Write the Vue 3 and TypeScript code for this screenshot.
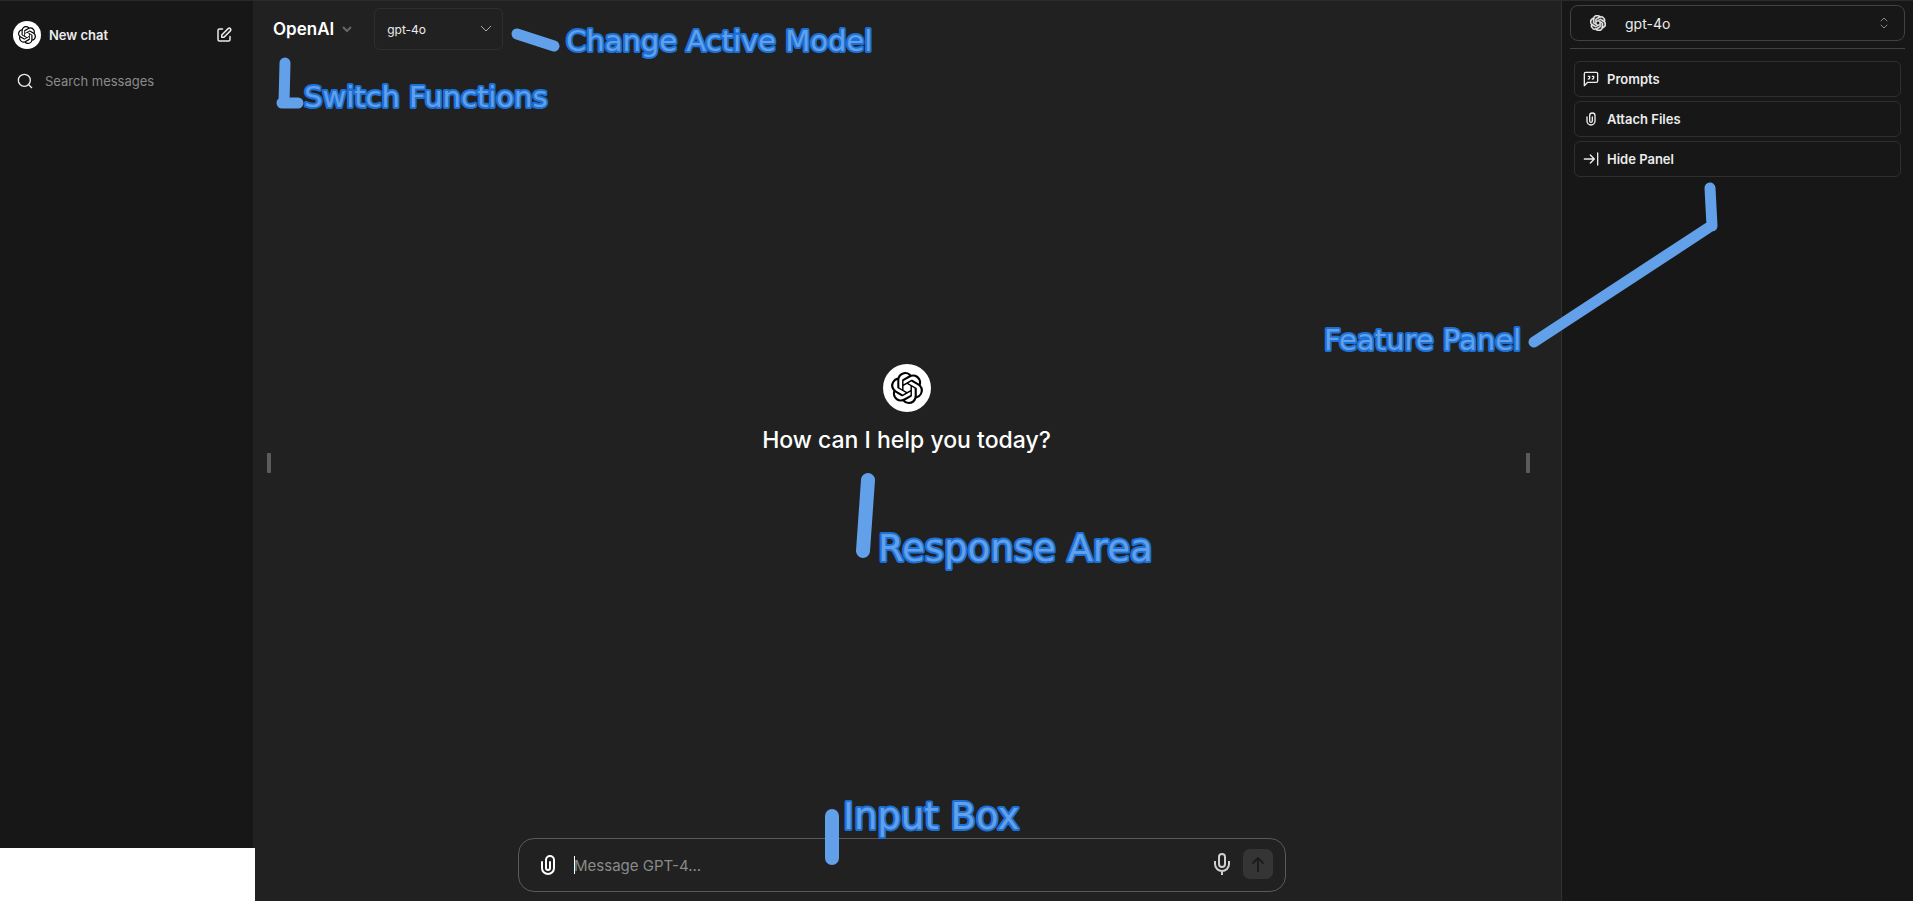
<script setup lang="ts">
import { ref } from 'vue'

const activeModel = ref('gpt-4o')
const panelModel = ref('gpt-4o')
const search = ref('')
const message = ref('')

const logoPath =
  'M22.2819 9.8211a5.9847 5.9847 0 0 0-.5157-4.9108 6.0462 6.0462 0 0 0-6.5098-2.9A6.0651 6.0651 0 0 0 4.9807 4.1818a5.9847 5.9847 0 0 0-3.9977 2.9 6.0462 6.0462 0 0 0 .7427 7.0966 5.98 5.98 0 0 0 .511 4.9107 6.051 6.051 0 0 0 6.5146 2.9001A5.9847 5.9847 0 0 0 13.2599 24a6.0557 6.0557 0 0 0 5.7718-4.2058 5.9894 5.9894 0 0 0 3.9977-2.9001 6.0557 6.0557 0 0 0-.7475-7.0729zm-9.022 12.6081a4.4755 4.4755 0 0 1-2.8764-1.0408l.1419-.0804 4.7783-2.7582a.7948.7948 0 0 0 .3927-.6813v-6.7369l2.02 1.1686a.071.071 0 0 1 .038.052v5.5826a4.504 4.504 0 0 1-4.4945 4.4944zm-9.6607-4.1254a4.4708 4.4708 0 0 1-.5346-3.0137l.142.0852 4.783 2.7582a.7712.7712 0 0 0 .7806 0l5.8428-3.3685v2.3324a.0804.0804 0 0 1-.0332.0615L9.74 19.9502a4.4992 4.4992 0 0 1-6.1408-1.6464zM2.3408 7.8956a4.485 4.485 0 0 1 2.3655-1.9728V11.6a.7664.7664 0 0 0 .3879.6765l5.8144 3.3543-2.0201 1.1685a.0757.0757 0 0 1-.071 0l-4.8303-2.7865A4.504 4.504 0 0 1 2.3408 7.872zm16.5963 3.8558L13.1038 8.364 15.1192 7.2a.0757.0757 0 0 1 .071 0l4.8303 2.7913a4.4944 4.4944 0 0 1-.6765 8.1042v-5.6772a.79.79 0 0 0-.407-.667zm2.0107-3.0231l-.142-.0852-4.7735-2.7818a.7759.7759 0 0 0-.7854 0L9.409 9.2297V6.8974a.0662.0662 0 0 1 .0284-.0615l4.8303-2.7866a4.4992 4.4992 0 0 1 6.6802 4.66zM8.3065 12.863l-2.02-1.1638a.0804.0804 0 0 1-.038-.0567V6.0742a4.4992 4.4992 0 0 1 7.3757-3.4537l-.142.0805L8.704 5.459a.7948.7948 0 0 0-.3927.6813zm1.0976-2.3654l2.602-1.4998 2.6069 1.4998v2.9994l-2.5974 1.4997-2.6067-1.4997Z'

interface Note {
  text: string
  x: number
  y: number
  large: boolean
}

const notes: Note[] = [
  { text: 'Change Active Model', x: 566, y: 51, large: false },
  { text: 'Switch Functions', x: 304, y: 107, large: false },
  { text: 'Feature Panel', x: 1324, y: 350, large: false },
  { text: 'Response Area', x: 878, y: 561, large: true },
  { text: 'Input Box', x: 843, y: 829, large: true },
]
</script>

<template>
  <div class="app">
    <aside class="sidebar">
      <button type="button" class="new-chat">
        <span class="avatar small">
          <svg viewBox="0 0 24 24" width="18" height="18" fill="currentColor"><path :d="logoPath" /></svg>
        </span>
        <span class="new-label">New chat</span>
        <svg class="compose" viewBox="0 0 24 24" width="18" height="18" fill="currentColor">
          <path fill-rule="evenodd" d="M16.793 2.793a3.121 3.121 0 1 1 4.414 4.414l-8.5 8.5A1 1 0 0 1 12 16H9a1 1 0 0 1-1-1v-3a1 1 0 0 1 .293-.707l8.5-8.5Zm3 1.414a1.121 1.121 0 0 0-1.586 0L10 12.414V14h1.586l8.207-8.207a1.121 1.121 0 0 0 0-1.586ZM6 5a1 1 0 0 0-1 1v12a1 1 0 0 0 1 1h12a1 1 0 0 0 1-1v-4a1 1 0 1 1 2 0v4a3 3 0 0 1-3 3H6a3 3 0 0 1-3-3V6a3 3 0 0 1 3-3h4a1 1 0 1 1 0 2H6Z" />
        </svg>
      </button>
      <label class="search">
        <svg viewBox="0 0 24 24" width="16" height="16" fill="none" stroke="currentColor" stroke-width="2" stroke-linecap="round">
          <circle cx="11" cy="11" r="9" />
          <path d="m22 22-4-4" />
        </svg>
        <input v-model="search" type="text" placeholder="Search messages" aria-label="Search messages" />
      </label>
      <div class="account"></div>
    </aside>

    <main class="chat">
      <header class="toolbar">
        <button type="button" class="endpoint">
          OpenAI
          <svg viewBox="0 0 10 8" width="10" height="8" fill="none" stroke="currentColor" stroke-width="2"><path d="m1 2 4 4 4-4" /></svg>
        </button>
        <div class="model">
          <select v-model="activeModel" aria-label="Active model">
            <option>gpt-4o</option>
          </select>
          <svg viewBox="0 0 12 8" width="12" height="8" fill="none" stroke="currentColor"><path d="m1 1 5 5 5-5" /></svg>
        </div>
      </header>

      <section class="landing">
        <span class="handle"></span>
        <div class="welcome">
          <span class="avatar big">
            <svg viewBox="0 0 24 24" width="32" height="32" fill="currentColor"><path :d="logoPath" /></svg>
          </span>
          <h1>How can I help you today?</h1>
        </div>
        <span class="handle"></span>
      </section>

      <form class="composer" @submit.prevent>
        <button type="button" class="icon" aria-label="Attach files">
          <svg viewBox="0 0 24 24" width="24" height="24" fill="currentColor">
            <path fill-rule="evenodd" d="M9 7a5 5 0 0 1 10 0v8a7 7 0 1 1-14 0V9a1 1 0 0 1 2 0v6a5 5 0 0 0 10 0V7a3 3 0 1 0-6 0v8a1 1 0 1 0 2 0V9a1 1 0 1 1 2 0v6a3 3 0 1 1-6 0V7Z" />
          </svg>
        </button>
        <div class="field">
          <span class="caret"></span>
          <input v-model="message" type="text" placeholder="Message GPT-4..." aria-label="Message" />
        </div>
        <div class="actions">
          <button type="button" class="mic" aria-label="Use microphone">
            <svg viewBox="0 0 18 24" width="18" height="24" fill="none" stroke="currentColor" stroke-width="2">
              <rect x="6" y="2" width="6" height="13" rx="3" />
              <path d="M2 9v3a7 7 0 0 0 14 0V9M9 19v4" />
            </svg>
          </button>
          <button type="submit" class="send" aria-label="Send message">
            <svg viewBox="0 0 24 24" width="24" height="24" fill="none" stroke="currentColor" stroke-width="2" stroke-linecap="round" stroke-linejoin="round"><path d="M7 11l5-5 5 5M12 6v13" /></svg>
          </button>
        </div>
      </form>
    </main>

    <aside class="panel">
      <div class="panel-model">
        <svg class="mark" viewBox="0 0 24 24" width="16" height="16" fill="currentColor" stroke="currentColor"><path :d="logoPath" /></svg>
        <select v-model="panelModel" aria-label="Model">
          <option>gpt-4o</option>
        </select>
        <svg class="updown" viewBox="0 0 8 12" width="8" height="12" fill="none" stroke="currentColor" stroke-linecap="round"><path d="m1 4 3-3 3 3M1 8l3 3 3-3" /></svg>
      </div>
      <nav class="features">
        <button type="button">
          <svg viewBox="0 0 24 24" width="16" height="16" fill="none" stroke="currentColor" stroke-width="2" stroke-linecap="round" stroke-linejoin="round">
            <path d="M2 22V4a2 2 0 0 1 2-2h16a2 2 0 0 1 2 2v11a2 2 0 0 1-2 2H7zM8 12a2 2 0 0 0 2-2V8H8M14 12a2 2 0 0 0 2-2V8h-2" />
          </svg>
          Prompts
        </button>
        <button type="button">
          <svg viewBox="0 0 24 24" width="16" height="16" fill="currentColor">
            <path fill-rule="evenodd" d="M9 7a5 5 0 0 1 10 0v8a7 7 0 1 1-14 0V9a1 1 0 0 1 2 0v6a5 5 0 0 0 10 0V7a3 3 0 1 0-6 0v8a1 1 0 1 0 2 0V9a1 1 0 1 1 2 0v6a3 3 0 1 1-6 0V7Z" />
          </svg>
          Attach Files
        </button>
        <button type="button">
          <svg viewBox="0 0 24 24" width="16" height="16" fill="none" stroke="currentColor" stroke-width="2" stroke-linecap="round" stroke-linejoin="round">
            <path d="M2 12h15M11 6l6 6-6 6M22 3v18" />
          </svg>
          Hide Panel
        </button>
      </nav>
    </aside>

    <svg class="notes">
      <g class="strokes">
        <path d="M517 34 554 46" />
        <path d="M285 63 284 103M282 103h16" />
        <path d="M1710 188 1712 226M1708 228 1534 342" />
        <path class="wide" d="M868 480 863 551" />
        <path class="wide" d="M832 816v42" />
      </g>
      <text v-for="note in notes" :key="note.text" :x="note.x" :y="note.y" :class="{ large: note.large }">{{ note.text }}</text>
    </svg>
  </div>
</template>

<style>
body {
  margin: 0;
  background: #212121;
}
</style>

<style scoped>
.app {
  position: relative;
  box-sizing: border-box;
  display: flex;
  min-height: 100vh;
  border-top: 1px solid #2a2a2a;
  background: #212121;
  color: #ececec;
  font-family: Inter, "Liberation Sans", sans-serif;
  font-size: 13px;
}
.app * {
  box-sizing: border-box;
}
button,
input,
select {
  margin: 0;
  padding: 0;
  border: 0;
  outline: 0;
  background: none;
  color: inherit;
  font: inherit;
}
svg {
  flex: none;
  display: block;
}
select {
  appearance: none;
}
input::placeholder {
  color: #8a8a8a;
  opacity: 1;
}
.sidebar {
  flex: none;
  width: 253px;
  display: flex;
  flex-direction: column;
  padding-top: 14px;
  background: #171717;
}
.new-chat {
  display: flex;
  align-items: center;
  height: 40px;
  padding: 0 20px 0 13px;
  font-weight: 600;
  text-align: left;
}
.new-label {
  flex: 1;
  padding-left: 8px;
}
.avatar {
  display: flex;
  align-items: center;
  justify-content: center;
  border-radius: 50%;
  background: #fff;
  color: #000;
}
.small {
  width: 28px;
  height: 28px;
}
.big {
  width: 48px;
  height: 48px;
}
.search {
  display: flex;
  align-items: center;
  gap: 12px;
  height: 40px;
  margin-top: 6px;
  padding: 0 17px;
}
.search input {
  flex: 1;
  min-width: 0;
}
.account {
  position: relative;
  height: 53px;
  margin: auto -2px 0 0;
  background: #fff;
}
.chat {
  flex: 1;
  min-width: 0;
  display: flex;
  flex-direction: column;
}
.toolbar {
  display: flex;
  align-items: center;
  gap: 22px;
  padding: 7px 20px 0;
}
.endpoint {
  display: flex;
  align-items: center;
  gap: 8px;
  font-size: 17px;
  font-weight: 600;
  color: #fff;
}
.endpoint svg {
  color: #666;
}
.model {
  position: relative;
}
.model select {
  display: block;
  width: 129px;
  height: 42px;
  padding: 0 12px;
  border: 1px solid #2f2f2f;
  border-radius: 6px;
  font-size: 12px;
}
.model svg {
  position: absolute;
  right: 11px;
  top: 17px;
  color: #aaa;
  pointer-events: none;
}
.landing {
  flex: 1;
  display: flex;
  align-items: center;
  justify-content: space-between;
  padding: 38px 31px 0 14px;
}
.handle {
  width: 4px;
  height: 20px;
  border-radius: 1px;
  background: #5c5c5c;
}
.welcome {
  display: flex;
  flex-direction: column;
  align-items: center;
  gap: 12px;
  margin: 0 0 106px 16px;
}
h1 {
  margin: 0;
  font-size: 23px;
  line-height: 32px;
  font-weight: 500;
  color: #fff;
}
.composer {
  display: flex;
  align-items: center;
  width: 768px;
  max-width: 90%;
  height: 54px;
  margin: 0 auto 9px;
  position: relative;
  right: 5px;
  padding: 0 12px 0 17px;
  border: 1px solid #5a5a5a;
  border-radius: 16px;
}
.icon {
  color: #fff;
}
.field {
  position: relative;
  flex: 1;
  margin-left: 14px;
  font-size: 15px;
}
.field input {
  display: block;
  width: 100%;
  height: 24px;
}
.caret {
  position: absolute;
  left: 0;
  top: 3px;
  width: 1px;
  height: 18px;
  background: #fff;
}
.actions {
  display: flex;
  align-items: center;
  gap: 12px;
  padding-bottom: 3px;
}
.mic {
  color: #d0d0d0;
}
.send {
  width: 30px;
  height: 30px;
  display: flex;
  align-items: center;
  justify-content: center;
  border-radius: 7px;
  background: #353535;
  color: #1c1c1c;
}
.panel {
  flex: none;
  width: 352px;
  padding: 4px 8px;
  border-left: 1px solid #303030;
  background: #171717;
}
.panel-model {
  position: relative;
  display: flex;
  align-items: center;
}
.panel-model select {
  width: 100%;
  height: 36px;
  padding: 0 54px;
  border: 1px solid #424242;
  border-radius: 8px;
  font-size: 14px;
}
.mark {
  position: absolute;
  left: 20px;
}
.updown {
  position: absolute;
  right: 17px;
  color: #888;
  pointer-events: none;
}
.features {
  display: flex;
  flex-direction: column;
  gap: 4px;
  margin-top: 7px;
  padding: 12px 4px 0;
  border-top: 1px solid #424242;
}
.features button {
  display: flex;
  align-items: center;
  gap: 8px;
  height: 36px;
  padding: 0 8px;
  border: 1px solid #2f2f2f;
  border-radius: 6px;
  font-weight: 600;
}
.notes {
  position: absolute;
  left: 0;
  top: -1px;
  width: 100%;
  height: 100%;
  pointer-events: none;
}
.strokes {
  fill: none;
  stroke: #62a0ea;
  stroke-width: 11px;
  stroke-linecap: round;
}
.wide {
  stroke-width: 14px;
}
.notes text {
  fill: #62a0ea;
  stroke: #1c71d8;
  stroke-width: 4px;
  stroke-linejoin: round;
  paint-order: stroke;
  font-family: "DejaVu Sans", sans-serif;
  font-size: 29px;
}
.notes .large {
  font-size: 37px;
}
</style>
